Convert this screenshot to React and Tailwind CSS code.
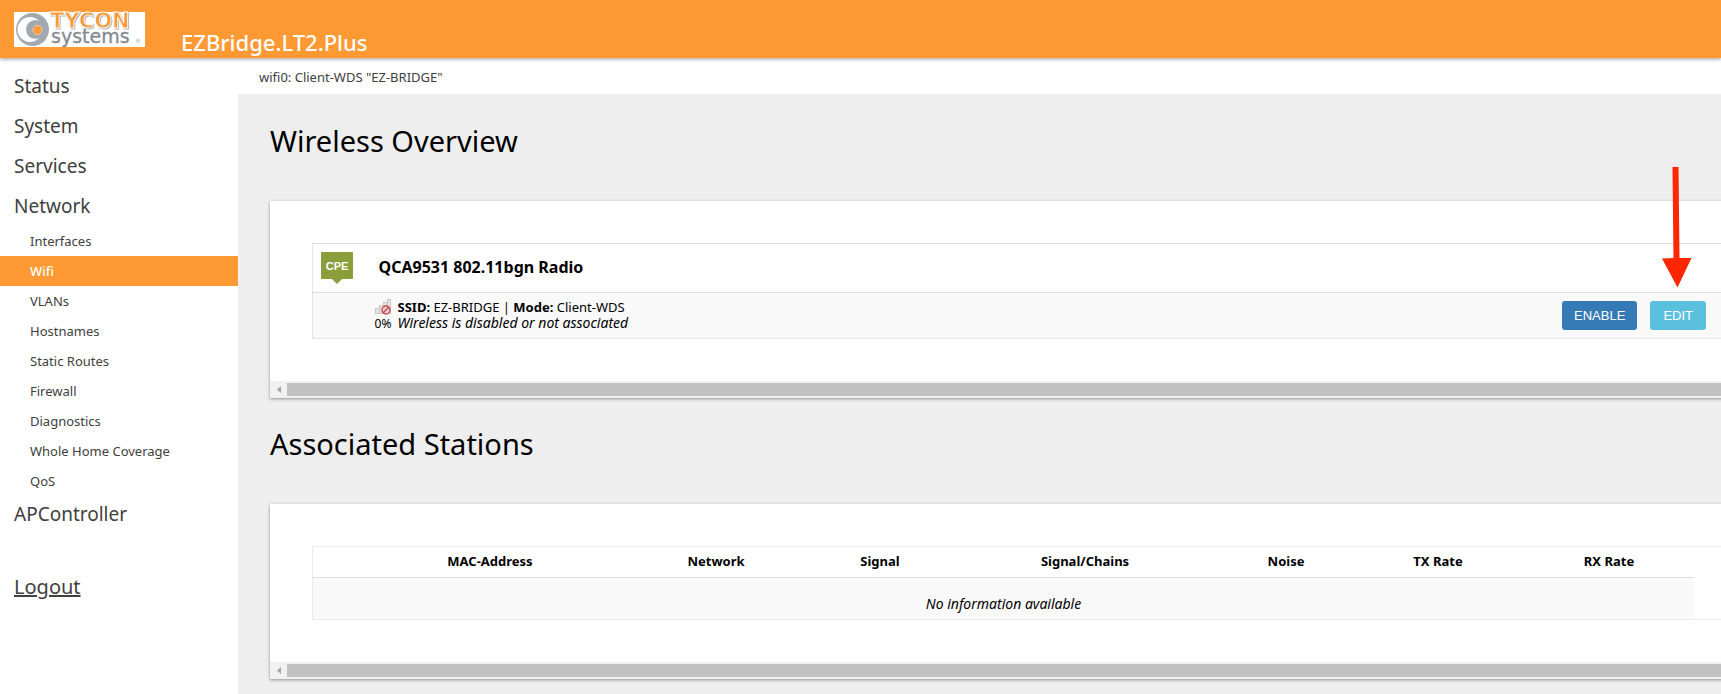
import React from "react";

const networkItems = [
  "Interfaces",
  "Wifi",
  "VLANs",
  "Hostnames",
  "Static Routes",
  "Firewall",
  "Diagnostics",
  "Whole Home Coverage",
  "QoS",
];

function Logo() {
  return (
    <svg className="h-[35px] w-[131px] overflow-visible" viewBox="0 0 131 35" role="img" aria-label="Tycon Systems">
      <rect width="131" height="35" fill="#fff" />
      <circle cx="18.500" cy="17.500" r="16.500" fill="#a3a9b1" />
      <circle cx="16" cy="17.500" r="12.500" fill="#fdfdfd" />
      <circle cx="21.500" cy="17.500" r="9.500" fill="#a3a9b1" />
      <circle cx="23.500" cy="18" r="4.500" fill="#ff9a3c" stroke="#f3c79a" />
      <g fontFamily="'DejaVu Sans', sans-serif">
        <text className="[filter:drop-shadow(1px_1px_0_#b4b4b4)]" x="36" y="16" fontSize="21" fontWeight="700" fill="#f79b3a" stroke="#fff" strokeWidth="0.800">TYCON</text>
        <text x="37" y="30.500" fontSize="19" fill="#858a91" stroke="#858a91" strokeWidth="0.300">systems</text>
        <text x="121" y="30.500" fontSize="6" fill="#a3a9b1">®</text>
      </g>
    </svg>
  );
}

function CpeIcon() {
  return (
    <svg className="block h-8 w-8" viewBox="0 0 32 32" role="img" aria-label="CPE">
      <path d="M1 0h30a1 1 0 0 1 1 1v25a1 1 0 0 1-1 1H21l-5 5-5-5H1a1 1 0 0 1-1-1V1a1 1 0 0 1 1-1z" fill="#8a9e3b" />
      <text x="16" y="17.500" textAnchor="middle" fontFamily="'Liberation Sans', sans-serif" fontWeight="700" fontSize="11" fill="#fff">CPE</text>
    </svg>
  );
}

function SignalIcon() {
  return (
    <svg className="block h-4 w-4" viewBox="0 0 16 16" aria-hidden="true">
      <g fill="#e3e4e0" stroke="#c9cac7">
        <rect x="0.500" y="9.500" width="4" height="5" />
        <rect x="4.500" y="6.500" width="4" height="8" />
        <rect x="8.500" y="3.500" width="4" height="11" />
        <rect x="12.500" y="0.500" width="3" height="14" />
      </g>
      <circle cx="11" cy="11" r="4" fill="#ecd9d7" stroke="#c9494b" strokeWidth="1.500" />
      <path d="M13.800 8.200l-5.600 5.600" stroke="#c9494b" strokeWidth="1.500" />
    </svg>
  );
}

function ScrollTrack() {
  return (
    <div className="flex h-[17px] bg-[#f1f1f1] py-0.5">
      <div className="flex w-[17px] items-center justify-center">
        <svg className="h-[7px] w-1" viewBox="0 0 4 7" aria-hidden="true">
          <path d="M4 0v7L0 3.500z" fill="#a3a3a3" />
        </svg>
      </div>
      <div className="flex-1 bg-[#c1c1c1]" />
    </div>
  );
}

function Panel({ title, children }) {
  return (
    <section>
      <h2 className="pt-[25px] pb-[39px] text-[29px] leading-[42px] text-black">{title}</h2>
      <div className="-mr-4 bg-white shadow-[0_1px_3px_rgba(0,0,0,0.4)]">
        <div className="py-[42px] pl-[42px]">{children}</div>
        <ScrollTrack />
      </div>
    </section>
  );
}

function TopLink({ children }) {
  return (
    <a href="#" className="block pl-3.5 text-[19px] leading-10">
      {children}
    </a>
  );
}

export default function App() {
  return (
    <div className="flex min-h-screen flex-col overflow-hidden bg-white font-['Noto_Sans','Open_Sans',sans-serif] text-[13px] text-[#404040]">
      <header className="relative z-10 flex h-[58px] items-start bg-[#ff9933] pl-3.5 text-white shadow-[0_1px_4px_rgba(0,0,0,0.4)]">
        <a href="#" className="mt-3 block"><Logo /></a>
        <h1 className="mt-[26px] ml-9 text-[22px] leading-8 font-medium">EZBridge.LT2.Plus</h1>
      </header>
      <div className="flex flex-1">
        <nav className="w-[238px] shrink-0 pt-2">
          <TopLink>Status</TopLink>
          <TopLink>System</TopLink>
          <TopLink>Services</TopLink>
          <TopLink>Network</TopLink>
          <ul className="-mb-0.5">
            {networkItems.map((item) => (
              <li key={item}>
                <a
                  href="#"
                  className={
                    item === "Wifi"
                      ? "block bg-[#ff9933] pl-[30px] leading-[30px] font-medium text-white"
                      : "block pl-[30px] leading-[30px]"
                  }
                >
                  {item}
                </a>
              </li>
            ))}
          </ul>
          <TopLink>APController</TopLink>
          <a href="#" className="mt-[33px] block pl-3.5 text-xl leading-10 underline">Logout</a>
        </nav>
        <main className="flex min-w-0 flex-1 flex-col">
          <div className="pt-0.5 pl-[21px] leading-[34px]">
            <a href="#">wifi0: Client-WDS "EZ-BRIDGE"</a>
          </div>
          <div className="relative flex-1 overflow-hidden bg-[#eeeeee] pt-px pl-8 text-black">
            <Panel title="Wireless Overview">
              <table className="w-full border border-[#e6e6e6]">
                <tbody>
                  <tr className="h-[49px] border-y border-[#dddddd]">
                    <td className="w-[62px] pl-2"><CpeIcon /></td>
                    <td colSpan="2" className="pb-0.5 pl-1 text-base leading-6 font-bold">QCA9531 802.11bgn Radio</td>
                  </tr>
                  <tr className="h-[46px] bg-[#f9f9f9]">
                    <td />
                    <td>
                      <div className="flex gap-1.5">
                        <div className="flex w-[17px] flex-col items-center">
                          <SignalIcon />
                          <span className="text-xs leading-[18px]">0%</span>
                        </div>
                        <div className="leading-4">
                          <p><b>SSID:</b> EZ-BRIDGE | <b>Mode:</b> Client-WDS</p>
                          <p className="text-sm leading-4 italic">Wireless is disabled or not associated</p>
                        </div>
                      </div>
                    </td>
                    <td className="pr-[30px]">
                      <div className="flex justify-end gap-[13px] font-['Liberation_Sans',Arial,sans-serif] text-[13px] text-white">
                        <button className="h-[29px] rounded-[3px] bg-[#337ab7] px-3">ENABLE</button>
                        <button className="h-[29px] rounded-[3px] bg-[#5bc0de] px-[13px]">EDIT</button>
                      </div>
                    </td>
                  </tr>
                </tbody>
              </table>
            </Panel>
            <Panel title="Associated Stations">
              <div className="border border-[#ebebeb] pr-[42px]">
                <table className="w-full table-fixed text-center">
                  <colgroup>
                    <col className="w-[45px]" />
                    <col className="w-[264px]" />
                    <col className="w-[188px]" />
                    <col className="w-[140px]" />
                    <col className="w-[270px]" />
                    <col className="w-[132px]" />
                    <col className="w-[172px]" />
                    <col className="w-[170px]" />
                  </colgroup>
                  <thead>
                    <tr className="h-[30px] border-b border-[#dddddd]">
                      <th />
                      <th>MAC-Address</th>
                      <th>Network</th>
                      <th>Signal</th>
                      <th>Signal/Chains</th>
                      <th>Noise</th>
                      <th>TX Rate</th>
                      <th>RX Rate</th>
                    </tr>
                  </thead>
                  <tbody>
                    <tr className="h-[42px] bg-[#f9f9f9]">
                      <td colSpan="8" className="pt-3 text-sm italic">No information available</td>
                    </tr>
                  </tbody>
                </table>
              </div>
            </Panel>
            <svg className="pointer-events-none absolute top-[73px] right-[29px] h-[121px] w-[32px]" viewBox="0 0 32 121" aria-hidden="true">
              <path d="M12.500 0h6l1 91h12L17.500 120.500 2 91.500l11.500-.5z" fill="#ff2600" />
            </svg>
          </div>
        </main>
      </div>
    </div>
  );
}
